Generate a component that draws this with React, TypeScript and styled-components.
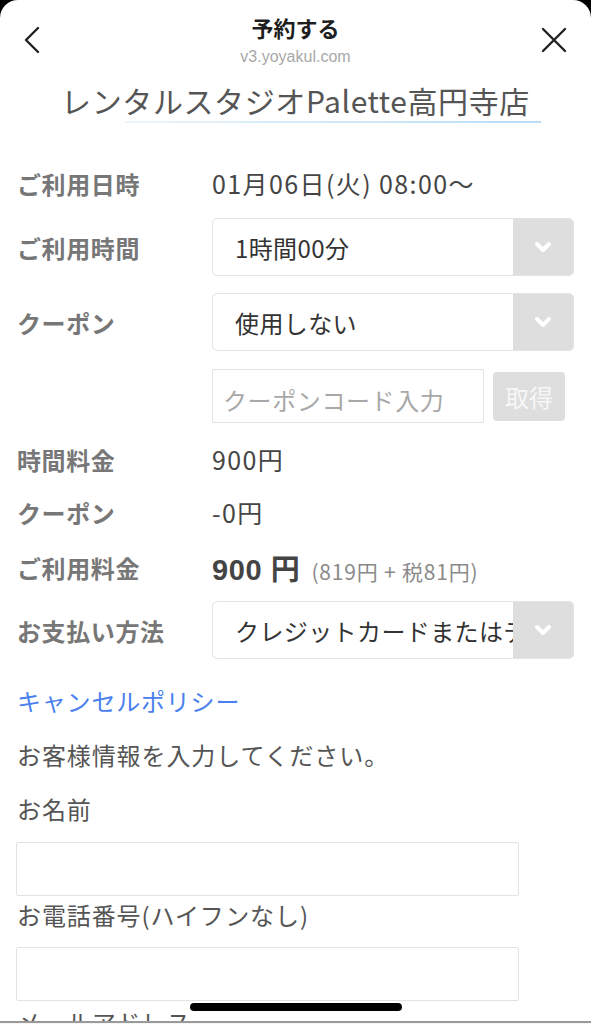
import React from 'react';
import styled, { createGlobalStyle } from 'styled-components';

const GlobalStyle = createGlobalStyle`
  html, body {
    margin: 0;
    padding: 0;
    background: #000;
  }
  body {
    font-family: "Noto Sans CJK JP", "Noto Sans", sans-serif;
  }
`;

const colors = {
  label: '#777777',
  value: '#454545',
  field: '#333333',
  border: '#e2e2e2',
  arrowBg: '#dedede',
  link: '#4a80f0',
  muted: '#a8a8a8',
};

const Frame = styled.div`
  position: relative;
  width: 591px;
  height: 1024px;
  display: flex;
  flex-direction: column;
  background: #fff;
  border-radius: 18px 18px 0 0;
  overflow: hidden;
`;

const Scroll = styled.div`
  flex: 1;
  overflow: hidden;
`;

const Toolbar = styled.div`
  height: 1px;
  border-top: 2px solid #9a9a9a;
  background: #f4f4f4;
`;

const HomeBar = styled.div`
  position: absolute;
  left: 190px;
  bottom: 13px;
  width: 212px;
  height: 8px;
  border-radius: 4px;
  background: #000;
`;

const Header = styled.header`
  display: grid;
  grid-template-columns: 80px 1fr 80px;
  align-items: start;
  padding-top: 12px;
`;

const IconButton = styled.div<{ $align: 'left' | 'right' }>`
  display: flex;
  justify-content: ${(p) => (p.$align === 'left' ? 'flex-start' : 'flex-end')};
  padding: ${(p) => (p.$align === 'left' ? '14px 0 0 22px' : '15px 24px 0 0')};
`;

const HeaderCenter = styled.div`
  display: flex;
  flex-direction: column;
  align-items: center;
  gap: 5px;
`;

const Title = styled.div`
  font-size: 22px;
  line-height: 30px;
  font-weight: 700;
  color: #1e1e1e;
`;

const Host = styled.div`
  font-family: "Liberation Sans", "Noto Sans", sans-serif;
  font-size: 16px;
  line-height: 20px;
  color: ${colors.muted};
`;

const StoreName = styled.h1`
  margin: 14px 0 0;
  text-align: center;
  font-size: 30px;
  line-height: 38px;
  font-weight: 400;
  letter-spacing: 0.6px;
  color: #555;
`;

const Underline = styled.div`
  margin: 2px 0 0 125px;
  width: 416px;
  height: 2px;
  background: linear-gradient(90deg, rgba(190, 222, 248, 0.3), #b9dcf6);
`;

const Form = styled.div`
  display: flex;
  flex-direction: column;
  padding: 0 17px 0 17px;
  margin-top: 40px;
`;

const Row = styled.div<{ $mt?: number; $h: number }>`
  display: grid;
  grid-template-columns: 195px 1fr;
  align-items: center;
  height: ${(p) => p.$h}px;
  margin-top: ${(p) => p.$mt ?? 0}px;
`;

const Label = styled.div`
  font-size: 24px;
  font-weight: 700;
  letter-spacing: 0.6px;
  color: ${colors.label};
  white-space: nowrap;
`;

const Value = styled.div`
  font-size: 25px;
  letter-spacing: 1.4px;
  color: ${colors.value};
  white-space: nowrap;
`;

const Total = styled.span`
  font-family: "Liberation Sans", "Noto Sans CJK JP", sans-serif;
  font-size: 29px;
  font-weight: 700;
  letter-spacing: 0.6px;
  color: #444;
  margin-right: 11px;
`;

const TotalYen = styled.span`
  font-family: "Noto Sans CJK JP", sans-serif;
  font-weight: 700;
`;

const Breakdown = styled.span`
  font-size: 21px;
  letter-spacing: 0.8px;
  color: #8a8a8a;
`;

const Select = styled.div`
  display: flex;
  height: 58px;
  border: 1px solid ${colors.border};
  border-radius: 5px;
  overflow: hidden;
  box-sizing: border-box;
`;

const SelectText = styled.div`
  flex: 1;
  display: flex;
  align-items: center;
  padding-left: 22px;
  font-size: 24px;
  letter-spacing: 0.4px;
  color: ${colors.field};
  white-space: nowrap;
  overflow: hidden;
`;

const SelectArrow = styled.div`
  width: 60px;
  display: flex;
  align-items: center;
  justify-content: center;
  background: ${colors.arrowBg};
`;

const CodeGroup = styled.div`
  display: flex;
  align-items: center;
  gap: 9px;
`;

const CodeInput = styled.div`
  width: 272px;
  height: 54px;
  box-sizing: border-box;
  border: 1px solid ${colors.border};
  border-radius: 2px;
  display: flex;
  align-items: center;
  padding: 6px 0 0 10px;
  font-size: 24px;
  letter-spacing: 0.6px;
  color: ${colors.muted};
  white-space: nowrap;
`;

const FetchButton = styled.div`
  width: 72px;
  height: 49px;
  border-radius: 4px;
  background: ${colors.arrowBg};
  color: #f7f7f7;
  font-size: 24px;
  display: flex;
  align-items: center;
  justify-content: center;
`;

const Link = styled.a<{ $mt: number }>`
  display: block;
  margin-top: ${(p) => p.$mt}px;
  height: 36px;
  line-height: 36px;
  font-size: 24px;
  letter-spacing: 0.8px;
  color: ${colors.link};
  text-decoration: none;
`;

const Text = styled.div<{ $mt: number }>`
  margin-top: ${(p) => p.$mt}px;
  height: 36px;
  line-height: 36px;
  font-size: 24px;
  letter-spacing: 0.9px;
  color: #555;
  white-space: nowrap;
`;

const TextInput = styled.div<{ $mt: number }>`
  margin: ${(p) => p.$mt}px 0 0 -1px;
  width: 503px;
  height: 54px;
  box-sizing: border-box;
  border: 1px solid ${colors.border};
  border-radius: 2px;
  background: #fff;
`;

const Chevron = () => (
  <svg width="20" height="14" viewBox="0 0 20 14">
    <path d="M4 4 L10 10 L16 4" fill="none" stroke="#fff" strokeWidth="4" strokeLinecap="round" strokeLinejoin="round" />
  </svg>
);

const SelectBox = ({ children }: { children: React.ReactNode }) => (
  <Select>
    <SelectText>{children}</SelectText>
    <SelectArrow>
      <Chevron />
    </SelectArrow>
  </Select>
);

export default function App() {
  return (
    <>
      <GlobalStyle />
      <Frame>
        <Scroll>
          <Header>
            <IconButton $align="left">
              <svg width="20" height="28" viewBox="0 0 20 28">
                <path d="M16 2 L4 14 L16 26" fill="none" stroke="#222" strokeWidth="2.4" strokeLinecap="round" strokeLinejoin="round" />
              </svg>
            </IconButton>
            <HeaderCenter>
              <Title>予約する</Title>
              <Host>v3.yoyakul.com</Host>
            </HeaderCenter>
            <IconButton $align="right">
              <svg width="26" height="26" viewBox="0 0 26 26">
                <path d="M2 2 L24 24 M24 2 L2 24" fill="none" stroke="#222" strokeWidth="2.4" strokeLinecap="round" />
              </svg>
            </IconButton>
          </Header>

          <StoreName>レンタルスタジオPalette高円寺店</StoreName>
          <Underline />

          <Form>
            <Row $h={40}>
              <Label>ご利用日時</Label>
              <Value>01月06日(火) 08:00〜</Value>
            </Row>
            <Row $h={58} $mt={15}>
              <Label>ご利用時間</Label>
              <SelectBox>1時間00分</SelectBox>
            </Row>
            <Row $h={58} $mt={17}>
              <Label>クーポン</Label>
              <SelectBox>使用しない</SelectBox>
            </Row>
            <Row $h={54} $mt={18}>
              <div />
              <CodeGroup>
                <CodeInput>クーポンコード入力</CodeInput>
                <FetchButton>取得</FetchButton>
              </CodeGroup>
            </Row>
            <Row $h={40} $mt={16}>
              <Label>時間料金</Label>
              <Value>900円</Value>
            </Row>
            <Row $h={40} $mt={13}>
              <Label>クーポン</Label>
              <Value>-0円</Value>
            </Row>
            <Row $h={40} $mt={14}>
              <Label>ご利用料金</Label>
              <Value>
                <Total>
                  900 <TotalYen>円</TotalYen>
                </Total>
                <Breakdown>(819円 + 税81円)</Breakdown>
              </Value>
            </Row>
            <Row $h={58} $mt={15}>
              <Label>お支払い方法</Label>
              <SelectBox>クレジットカードまたはデビットカード</SelectBox>
            </Row>

            <Link $mt={24} href="#">キャンセルポリシー</Link>
            <Text $mt={18}>お客様情報を入力してください。</Text>
            <Text $mt={18}>お名前</Text>
            <TextInput $mt={15} />
            <Text $mt={1}>お電話番号(ハイフンなし)</Text>
            <TextInput $mt={14} />
            <Text $mt={3}>メールアドレス</Text>
          </Form>
        </Scroll>
        <Toolbar />
        <HomeBar />
      </Frame>
    </>
  );
}
